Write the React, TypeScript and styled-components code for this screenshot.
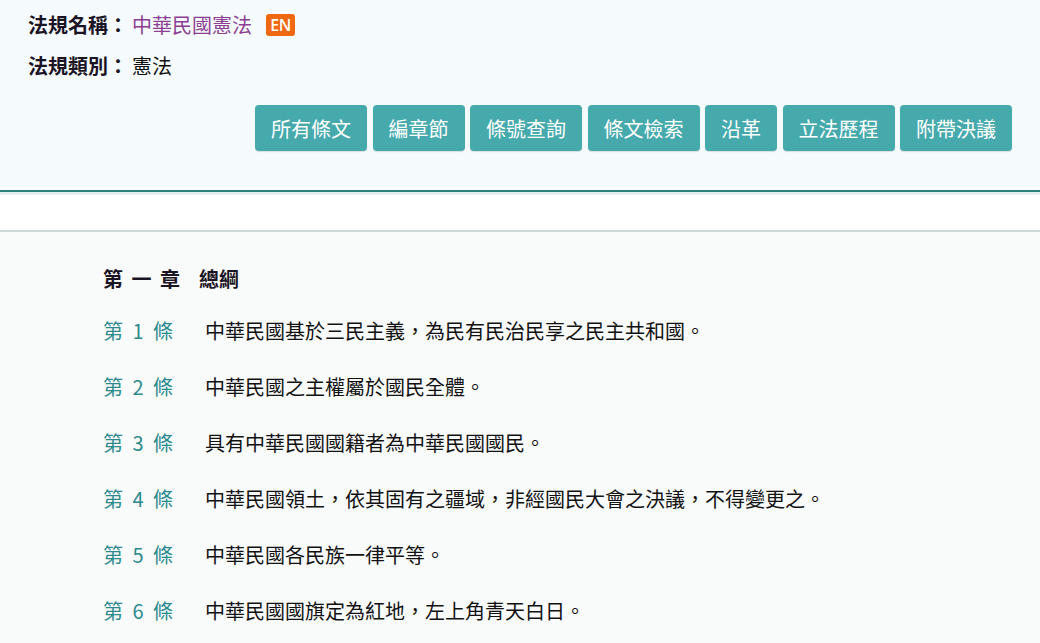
import React from "react";
import styled, { createGlobalStyle } from "styled-components";

const Global = createGlobalStyle`
  html, body { margin: 0; padding: 0; background: #f9fbfb; }
  body { font-family: "Noto Sans CJK TC", "Noto Sans", sans-serif; }
`;

const Header = styled.header`
  background: #f5fbfc;
  padding: 4px 28px 39px;
  border-bottom: 2px solid #2f7f80;
  box-shadow: 0 3px 0 #e4eeee;
`;

const InfoRow = styled.div`
  display: flex;
  align-items: center;
  height: 41px;
  font-size: 20px;
  color: #111;
`;

const InfoLabel = styled.span`
  font-weight: 700;
  color: #1b1424;
`;

const InfoValue = styled.span<{ $link?: boolean }>`
  margin-left: 4px;
  color: ${(p) => (p.$link ? "#8b3e92" : "#111")};
`;

const Badge = styled.span`
  display: inline-flex;
  align-items: center;
  justify-content: center;
  width: 29px;
  height: 22px;
  margin-left: 14px;
  border-radius: 3px;
  background: #f0680f;
  color: #fff;
  font-family: "Open Sans", "Liberation Sans", sans-serif;
  font-weight: 600;
  font-size: 16px;
  letter-spacing: -0.5px;
`;

const Toolbar = styled.nav`
  display: flex;
  justify-content: flex-end;
  gap: 5.5px;
  margin-top: 19px;
`;

const Button = styled.button`
  height: 46px;
  padding: 0 16px;
  border: none;
  border-radius: 4px;
  background: #46aaad;
  color: #fff;
  font-family: inherit;
  font-size: 20px;
  cursor: pointer;
  box-shadow: 0 1px 1px rgba(0, 0, 0, 0.12);
`;

const Spacer = styled.div`
  height: 35px;
  margin-top: 3px;
  background: #ffffff;
  border-bottom: 2px solid #cbd9d9;
`;

const Content = styled.main`
  padding: 24px 0 0 103px;
`;

const Chapter = styled.h2`
  margin: 0;
  font-size: 20px;
  font-weight: 700;
  line-height: 46px;
  color: #1b1424;
  word-spacing: 4px;
`;

const ChapterName = styled.span`
  margin-left: 19px;
`;

const Article = styled.div`
  display: flex;
  align-items: center;
  height: 56px;
  font-size: 20px;
`;

const ArticleNo = styled.span`
  width: 102px;
  flex: none;
  color: #2d8a8c;
  word-spacing: 5px;
`;

const ArticleText = styled.span`
  color: #111;
`;

const buttons = ["所有條文", "編章節", "條號查詢", "條文檢索", "沿革", "立法歷程", "附帶決議"];

const articles = [
  "中華民國基於三民主義，為民有民治民享之民主共和國。",
  "中華民國之主權屬於國民全體。",
  "具有中華民國國籍者為中華民國國民。",
  "中華民國領土，依其固有之疆域，非經國民大會之決議，不得變更之。",
  "中華民國各民族一律平等。",
  "中華民國國旗定為紅地，左上角青天白日。",
];

export default function App() {
  return (
    <>
      <Global />
      <Header>
        <InfoRow>
          <InfoLabel>法規名稱：</InfoLabel>
          <InfoValue $link>中華民國憲法</InfoValue>
          <Badge>EN</Badge>
        </InfoRow>
        <InfoRow>
          <InfoLabel>法規類別：</InfoLabel>
          <InfoValue>憲法</InfoValue>
        </InfoRow>
        <Toolbar>
          {buttons.map((b) => (
            <Button key={b}>{b}</Button>
          ))}
        </Toolbar>
      </Header>
      <Spacer />
      <Content>
        <Chapter>
          第 一 章<ChapterName>總綱</ChapterName>
        </Chapter>
        {articles.map((t, i) => (
          <Article key={i}>
            <ArticleNo>第 {i + 1} 條</ArticleNo>
            <ArticleText>{t}</ArticleText>
          </Article>
        ))}
      </Content>
    </>
  );
}
